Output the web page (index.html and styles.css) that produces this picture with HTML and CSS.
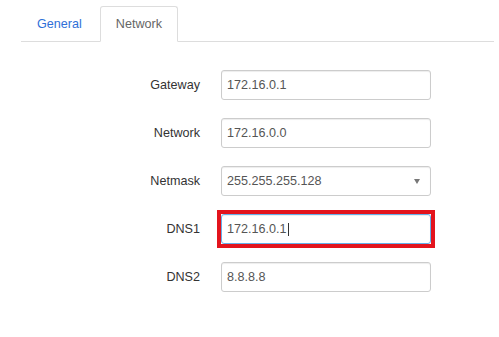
FILE: index.html
```html
<!DOCTYPE html>
<html lang="en">
<head>
  <meta charset="UTF-8">
  <meta name="viewport" content="width=device-width, initial-scale=1.0">
  <title>Network settings</title>
  <link rel="stylesheet" href="styles.css">
</head>
<body>
  <ul class="tabs">
    <li class="tab"><a href="#">General</a></li>
    <li class="tab active"><a href="#">Network</a></li>
  </ul>

  <div class="form">
    <div class="row">
      <label class="label">Gateway</label>
      <div class="field">172.16.0.1</div>
    </div>
    <div class="row">
      <label class="label">Network</label>
      <div class="field">172.16.0.0</div>
    </div>
    <div class="row">
      <label class="label">Netmask</label>
      <div class="field select">
        <span>255.255.255.128</span>
        <span class="arrow"></span>
      </div>
    </div>
    <!-- highlighted field -->
    <div class="row">
      <label class="label">DNS1</label>
      <div class="field focused">172.16.0.1<span class="caret"></span></div>
    </div>
    <div class="row">
      <label class="label">DNS2</label>
      <div class="field">8.8.8.8</div>
    </div>
  </div>
</body>
</html>
```

FILE: styles.css
```css
body {
  margin: 0;
  padding: 0;
  background-color: #fff;
  font-family: "Liberation Sans", Arial, sans-serif;
  font-size: 12.6px;
  color: #333;
}

.tabs {
  display: flex;
  list-style: none;
  margin: 6px 5px 0 21px;
  padding: 0;
  border-bottom: 1px solid #ddd;
}

.tab {
  margin-right: 2px;
  margin-bottom: -1px;
}

.tab a {
  display: block;
  height: 34px;
  line-height: 34px;
  padding: 0 15px;
  border: 1px solid transparent;
  border-radius: 3px 3px 0 0;
  color: #2f6fd8;
  text-decoration: none;
}

.tab.active a {
  color: #666;
  background-color: #fff;
  border-color: #ddd;
  border-bottom-color: #fff;
}

.form {
  padding-top: 28px;
}

.row {
  display: flex;
  align-items: center;
  gap: 21px;
  margin-bottom: 18px;
}

.label {
  width: 200px;
  text-align: right;
  color: #333;
}

.field {
  box-sizing: border-box;
  display: flex;
  align-items: center;
  width: 210px;
  height: 30px;
  padding: 0 5px;
  border: 1px solid #ccc;
  border-radius: 3px;
  color: #555;
  box-shadow: inset 0 1px 1px rgba(0,0,0,0.075);
}

.select {
  justify-content: space-between;
  padding-right: 10px;
}

.arrow {
  width: 0;
  height: 0;
  border-left: 3px solid transparent;
  border-right: 3px solid transparent;
  border-top: 5px solid #777;
}

.focused {
  position: relative;
  border-color: #66afe9;
}

/* red highlight box drawn over the field */
.focused:after {
  content: "";
  position: absolute;
  top: -5px;
  bottom: -5px;
  left: -5px;
  right: -5px;
  border: 4px solid #e3141d;
}

.caret {
  display: inline-block;
  width: 1px;
  height: 13px;
  margin-left: 1px;
  background-color: #333;
}
```
